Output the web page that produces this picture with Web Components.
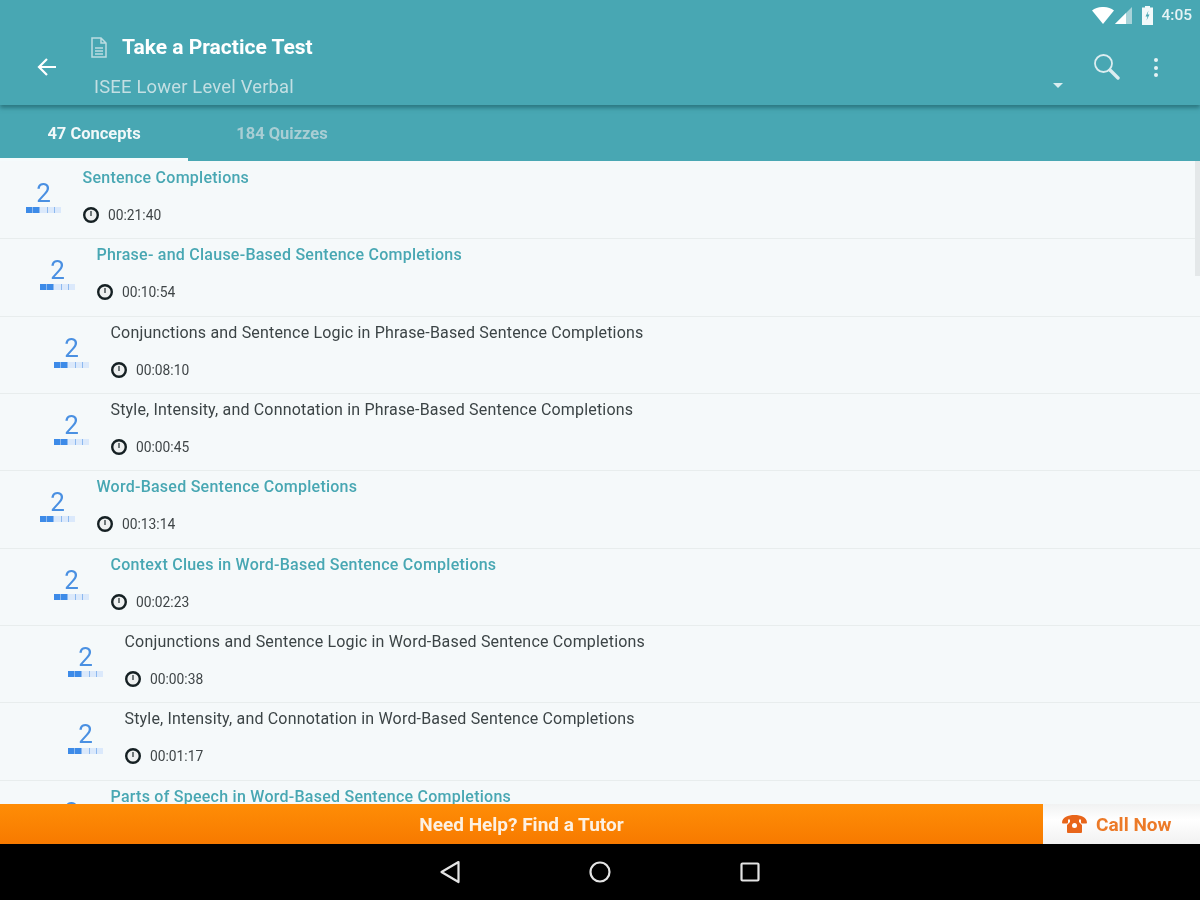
<!DOCTYPE html>
<html lang="en">
<head>
<meta charset="utf-8">
<title>Take a Practice Test</title>
<style>
  html, body { margin: 0; height: 100%; overflow: hidden; }
  body { font-family: Roboto, "Liberation Sans", sans-serif; }
</style>
</head>
<body>
<app-shell>
  <app-header slot="header" title="Take a Practice Test" subtitle="ISEE Lower Level Verbal" time="4:05"></app-header>
  <app-tabs slot="tabs" first="47 Concepts" second="184 Quizzes"></app-tabs>
  <concept-list slot="list">
    <concept-row level="0" time="00:21:40" link>Sentence Completions</concept-row>
    <concept-row level="1" time="00:10:54" link>Phrase- and Clause-Based Sentence Completions</concept-row>
    <concept-row level="2" time="00:08:10">Conjunctions and Sentence Logic in Phrase-Based Sentence Completions</concept-row>
    <concept-row level="2" time="00:00:45">Style, Intensity, and Connotation in Phrase-Based Sentence Completions</concept-row>
    <concept-row level="1" time="00:13:14" link>Word-Based Sentence Completions</concept-row>
    <concept-row level="2" time="00:02:23" link>Context Clues in Word-Based Sentence Completions</concept-row>
    <concept-row level="3" time="00:00:38">Conjunctions and Sentence Logic in Word-Based Sentence Completions</concept-row>
    <concept-row level="3" time="00:01:17">Style, Intensity, and Connotation in Word-Based Sentence Completions</concept-row>
    <concept-row level="2" time="00:04:02" link>Parts of Speech in Word-Based Sentence Completions</concept-row>
  </concept-list>
  <help-bar slot="help"></help-bar>
  <nav-bar slot="nav"></nav-bar>
</app-shell>

<script>
class AppShell extends HTMLElement {
  constructor() {
    super();
    const shadow = this.attachShadow({ mode: "open" });
    shadow.innerHTML = `
      <style>
        :host { display: flex; flex-direction: column; height: 900px; overflow: hidden; background: #f5f9fa; filter: blur(.7px); }
        .list { flex: 1; min-height: 0; overflow: hidden; position: relative; }
        .scroll { position: absolute; top: 0; right: 0; width: 5px; height: 115px; background: #e4e8e9; }
      </style>
      <slot name="header"></slot>
      <slot name="tabs"></slot>
      <div class="list"><slot name="list"></slot><div class="scroll"></div></div>
      <slot name="help"></slot>
      <slot name="nav"></slot>
    `;
  }
}

class AppHeader extends HTMLElement {
  constructor() {
    super();
    const shadow = this.attachShadow({ mode: "open" });
    shadow.innerHTML = `
      <style>
        :host { display: block; position: relative; z-index: 2; height: 105px; background: #48a7b3; box-shadow: 0 3px 4px rgba(20, 80, 90, .55); color: #fff; }
        .status { display: flex; justify-content: flex-end; align-items: center; height: 30px; padding-right: 8px; font-size: 15.500px; font-weight: 500; color: #e6f3f5; }
        .status svg { display: block; }
        .status .signal { margin: 0 10px 0 1px; }
        .status .batt { margin-right: 8px; }
        .bar { display: flex; align-items: flex-start; height: 75px; }
        .back { width: 94px; padding: 27px 0 0 37px; box-sizing: border-box; }
        .titles { flex: 1; min-width: 0; }
        .heading { display: flex; align-items: center; height: 34px; gap: 15px; font-size: 21px; font-weight: 700; }
        .heading svg { margin-left: -3px; }
        .sub { margin-top: 12px; font-size: 18.400px; color: #c3dfe3; letter-spacing: .2px; line-height: 22px; }
        .drop { width: 0; height: 0; margin: 53px 30px 0 0; border: 5.500px solid transparent; border-top: 5.500px solid #d9edf0; border-bottom: 0; }
        .search { margin: 23px 34px 0 0; }
        .more { margin: 28px 42px 0 0; display: flex; flex-direction: column; gap: 3.500px; }
        .more i { width: 4px; height: 4px; border-radius: 50%; background: #e6f3f5; }
        .doc { flex: none; }
      </style>
      <div class="status">
        <svg width="22" height="17" viewBox="0 0 22 17"><path d="M0 3.500C6-1.200 16-1.200 22 3.500L11 17z" fill="#fff"/></svg>
        <svg class="signal" width="17" height="17" viewBox="0 0 17 17"><path d="M0 17L17 0v17z" fill="#a8d3d9"/><path d="M0 17L11 6v11z" fill="#fff"/></svg>
        <svg class="batt" width="11" height="19" viewBox="0 0 11 19"><path d="M3 0h5v1.500h3V19H0V1.500h3z" fill="#f2f9fa"/><path d="M6.500 4.500L3.500 10.500h2l-1 4 3-6h-2z" fill="#48a7b3"/></svg>
        <span class="time"></span>
      </div>
      <div class="bar">
        <div class="back">
          <svg width="20" height="20" viewBox="0 0 20 20"><path d="M19 10H2.500M10 2l-8 8 8 8" fill="none" stroke="#fff" stroke-width="2.200"/></svg>
        </div>
        <div class="titles">
          <div class="heading">
            <svg class="doc" width="16" height="21" viewBox="0 0 16 21"><path d="M1 1h9l5 5v14H1zM10 1v5h5M4 11h8M4 14h8M4 17h8" fill="none" stroke="#bcdde2" stroke-width="1.500"/></svg>
            <span class="title"></span>
          </div>
          <div class="sub"></div>
        </div>
        <div class="drop"></div>
        <svg class="search" width="27" height="27" viewBox="0 0 27 27"><circle cx="10.500" cy="10.500" r="8.500" fill="none" stroke="#dcedf0" stroke-width="1.800"/><path d="M17 17l8 8" stroke="#dcedf0" stroke-width="3.400" stroke-linecap="round"/></svg>
        <div class="more"><i></i><i></i><i></i></div>
      </div>
    `;
    shadow.querySelector(".title").textContent = this.getAttribute("title");
    shadow.querySelector(".sub").textContent = this.getAttribute("subtitle");
    shadow.querySelector(".time").textContent = this.getAttribute("time");
  }
}

class AppTabs extends HTMLElement {
  constructor() {
    super();
    const shadow = this.attachShadow({ mode: "open" });
    shadow.innerHTML = `
      <style>
        :host { display: flex; height: 56px; background: #48a7b3; font-size: 16.500px; font-weight: 700; }
        div { width: 188px; box-sizing: border-box; display: flex; align-items: center; justify-content: center; padding-top: 1px; color: #a9ced4; }
        .on { color: #f1f8f9; border-bottom: 3px solid #f5fbfc; padding-top: 4px; }
      </style>
      <div class="on"></div>
      <div></div>
    `;
    const tabs = shadow.querySelectorAll("div");
    tabs[0].textContent = this.getAttribute("first");
    tabs[1].textContent = this.getAttribute("second");
  }
}

class ConceptList extends HTMLElement {
  constructor() {
    super();
    const shadow = this.attachShadow({ mode: "open" });
    shadow.innerHTML = `
      <style>:host { display: block; padding-top: 1px; }</style>
      <slot></slot>
    `;
  }
}

class ConceptRow extends HTMLElement {
  constructor() {
    super();
    const shadow = this.attachShadow({ mode: "open" });
    const level = Number(this.getAttribute("level") || 0);
    shadow.innerHTML = `
      <style>
        :host { display: flex; box-sizing: border-box; height: 77.350px; border-bottom: 1px solid #e8eded; padding-left: ${26 + level * 14}px; }
        .score { width: 57px; flex: none; padding-top: 18px; color: #4a90e2; font-size: 26px; line-height: 27px; }
        .score b { display: block; width: 35px; text-align: center; font-weight: 400; }
        .blocks { display: flex; gap: 1px; width: 35px; height: 6px; background: #8db9ef; }
        .blocks i { flex: 1; background: #dbe9fb; }
        .blocks i.f { background: #3d8be8; }
        .main { padding-top: 6px; }
        .name { font-size: 16px; line-height: 20px; margin-left: -.5px; font-weight: 400; color: #3c4446; letter-spacing: .18px; white-space: nowrap; }
        :host([link]) .name { color: #48a7b3; font-weight: 500; letter-spacing: .25px; }
        .meta { display: flex; align-items: center; gap: 9px; margin-top: 19px; font-size: 13.800px; color: #3f4547; }
        .meta svg { display: block; }
      </style>
      <div class="score"><b>2</b><div class="blocks"><i class="f"></i><i class="f"></i><i></i><i></i><i></i></div></div>
      <div class="main">
        <div class="name"><slot></slot></div>
        <div class="meta">
          <svg width="16" height="16" viewBox="0 0 16 16"><circle cx="8" cy="8" r="6.800" fill="#eef0f0" stroke="#152023" stroke-width="2.400"/><path d="M8 4v5" fill="none" stroke="#3a4446" stroke-width="1.400"/></svg>
          <span class="time"></span>
        </div>
      </div>
    `;
    shadow.querySelector(".time").textContent = this.getAttribute("time");
  }
}

class HelpBar extends HTMLElement {
  constructor() {
    super();
    const shadow = this.attachShadow({ mode: "open" });
    shadow.innerHTML = `
      <style>
        :host { display: flex; position: relative; z-index: 2; height: 40px; font-size: 19px; font-weight: 700; }
        .need { flex: 1; display: flex; align-items: center; justify-content: center; color: #fdf1e2; background: linear-gradient(#ff8d06, #f77a00); }
        .call { width: 157px; display: flex; align-items: center; gap: 9px; padding-left: 19px; box-sizing: border-box; color: #ec7a28; background: linear-gradient(#f1f2f2, #fff 40%, #f1f1f1); }
      </style>
      <div class="need">Need Help? Find a Tutor</div>
      <div class="call">
        <svg width="25" height="18" viewBox="0 0 25 18"><path d="M0 7.500C.500 2 6 0 12.500 0S24.500 2 25 7.500l-.500 1h-5l-.500-1V4.500h-2V7l3 3v7a1 1 0 0 1-1 1H6a1 1 0 0 1-1-1v-7l3-3V4.500H6v3l-.500 1h-5z" fill="#e8651a"/><circle cx="12.500" cy="10.500" r="2.500" fill="#fff"/></svg>
        <span>Call Now</span>
      </div>
    `;
  }
}

class NavBar extends HTMLElement {
  constructor() {
    super();
    const shadow = this.attachShadow({ mode: "open" });
    shadow.innerHTML = `
      <style>
        :host { display: flex; justify-content: center; align-items: center; gap: 128px; height: 56px; background: #000; }
        svg { display: block; }
      </style>
      <svg width="22" height="24" viewBox="0 0 22 24"><path d="M19.500 2L2.500 12l17 10z" fill="none" stroke="#e4e4e4" stroke-width="2.200" stroke-linejoin="round"/></svg>
      <svg width="22" height="22" viewBox="0 0 22 22"><circle cx="11" cy="11" r="9.500" fill="none" stroke="#e4e4e4" stroke-width="2.200"/></svg>
      <svg width="22" height="22" viewBox="0 0 22 22"><rect x="2.500" y="2.500" width="17" height="17" rx="1" fill="none" stroke="#e4e4e4" stroke-width="2.200"/></svg>
    `;
  }
}

customElements.define("app-shell", AppShell);
customElements.define("app-header", AppHeader);
customElements.define("app-tabs", AppTabs);
customElements.define("concept-list", ConceptList);
customElements.define("concept-row", ConceptRow);
customElements.define("help-bar", HelpBar);
customElements.define("nav-bar", NavBar);
</script>
</body>
</html>
